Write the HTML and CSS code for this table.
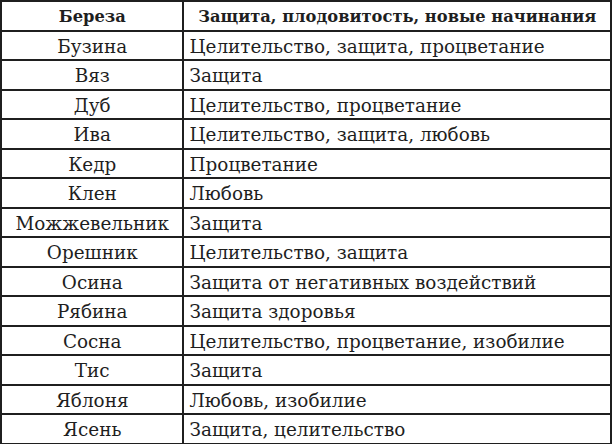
FILE: index.html
```html
<!DOCTYPE html>
<html lang="ru">
<head>
<meta charset="utf-8">
<link rel="stylesheet" href="styles.css">
</head>
<body>
<table class="tbl">
  <tr class="head"><th class="c1">Береза</th><th class="c2">Защита, плодовитость, новые начинания</th></tr>
  <tr><td class="c1">Бузина</td><td class="c2">Целительство, защита, процветание</td></tr>
  <tr><td class="c1">Вяз</td><td class="c2">Защита</td></tr>
  <tr><td class="c1">Дуб</td><td class="c2">Целительство, процветание</td></tr>
  <tr><td class="c1">Ива</td><td class="c2">Целительство, защита, любовь</td></tr>
  <tr><td class="c1">Кедр</td><td class="c2">Процветание</td></tr>
  <tr><td class="c1">Клен</td><td class="c2">Любовь</td></tr>
  <tr><td class="c1">Можжевельник</td><td class="c2">Защита</td></tr>
  <tr><td class="c1">Орешник</td><td class="c2">Целительство, защита</td></tr>
  <tr><td class="c1">Осина</td><td class="c2">Защита от негативных воздействий</td></tr>
  <tr><td class="c1">Рябина</td><td class="c2">Защита здоровья</td></tr>
  <tr><td class="c1">Сосна</td><td class="c2">Целительство, процветание, изобилие</td></tr>
  <tr><td class="c1">Тис</td><td class="c2">Защита</td></tr>
  <tr><td class="c1">Яблоня</td><td class="c2">Любовь, изобилие</td></tr>
  <tr><td class="c1">Ясень</td><td class="c2">Защита, целительство</td></tr>
</table>
</body>
</html>
```
FILE: styles.css
```css
html, body {
  margin: 0;
  padding: 0;
  background: #fff;
}
.tbl {
  border-collapse: collapse;
  width: 612px;
  font-family: "DejaVu Serif", "Liberation Serif", serif;
  font-size: 18.4px;
  color: #1e1e1e;
}
.tbl tr {
  height: 29.5px;
}
.tbl th,
.tbl td {
  border: 2px solid #1f1f1f;
  padding: 2px 5px 0 5.5px;
  vertical-align: middle;
  white-space: nowrap;
}
.tbl th {
  font-weight: bold;
  font-size: 16.3px;
  text-align: center;
}
.c1 {
  width: 169.5px;
  text-align: center;
}
.c2 {
  text-align: left;
}
```
